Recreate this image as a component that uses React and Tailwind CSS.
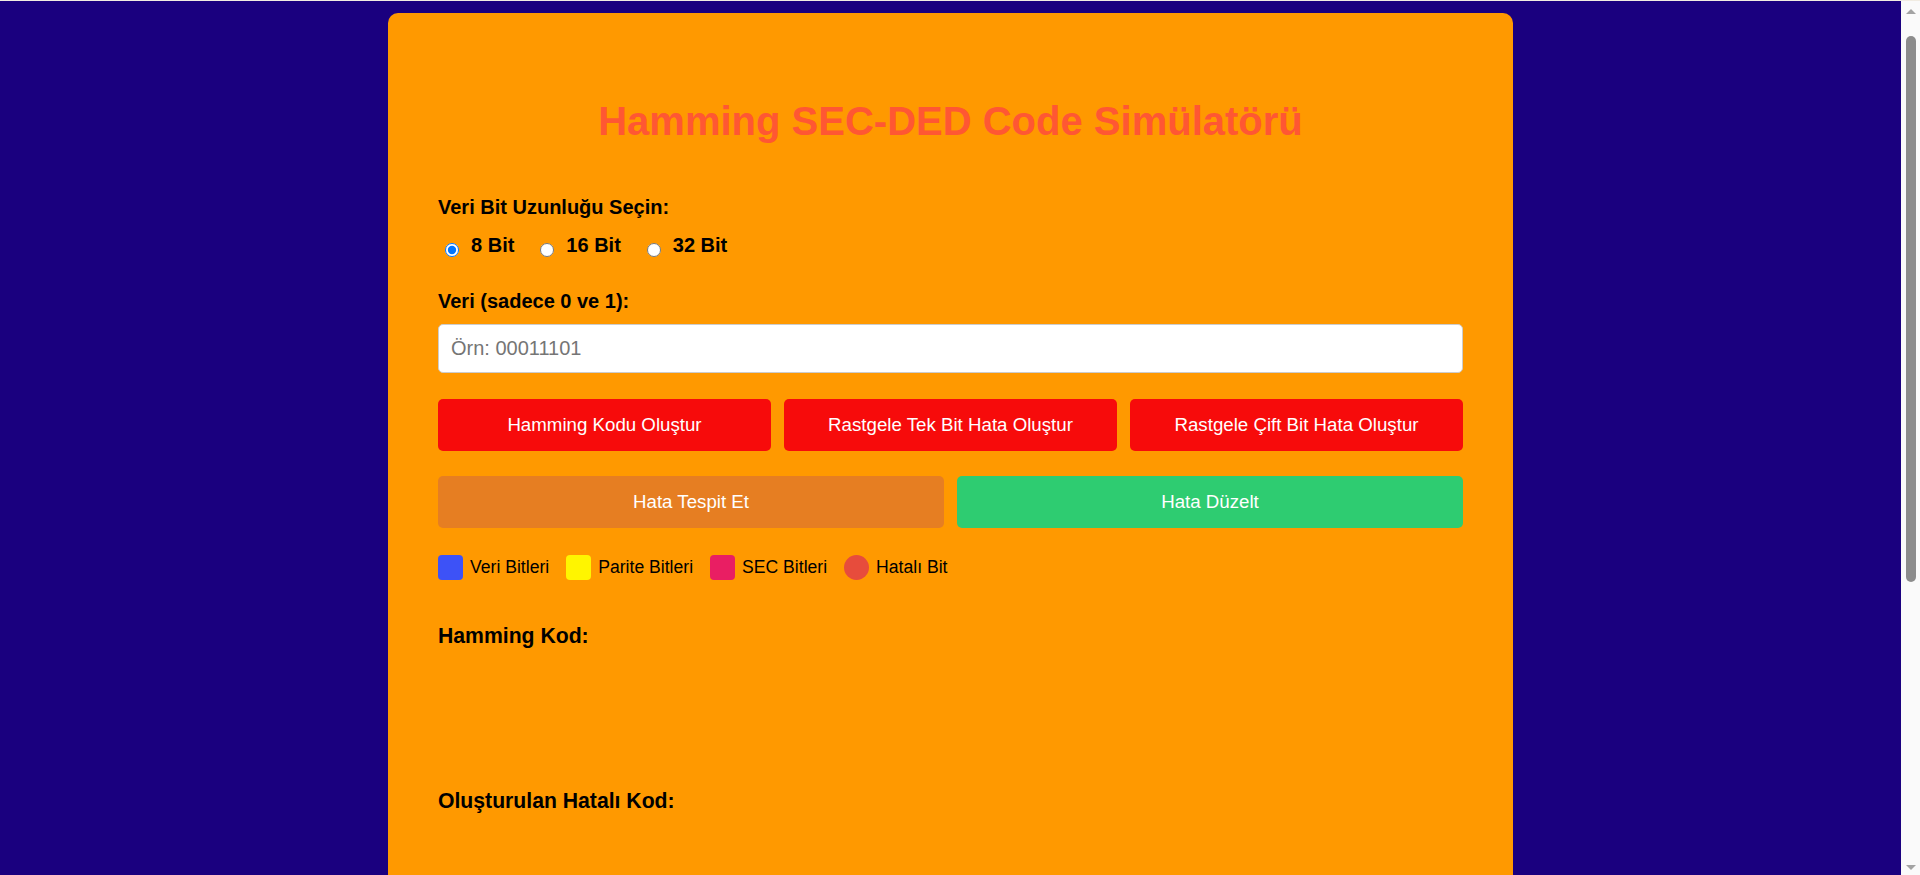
import React, { useState } from "react";

function FakeScrollbar() {
  return (
    <div className="fixed right-0 top-0 z-10 flex h-screen w-[19px] flex-col items-center bg-[#fafafa]">
      <div className="mt-[9px] h-0 w-0 border-x-[5px] border-b-[5px] border-x-transparent border-b-[#a3a3a3]" />
      <div className="mt-[22px] h-[546px] w-[10px] rounded-full bg-[#8c8c8c]" />
      <div className="flex-1" />
      <div className="mb-[5px] h-0 w-0 border-x-[5px] border-t-[5px] border-x-transparent border-t-[#a3a3a3]" />
    </div>
  );
}

export default function App() {
  const [bits, setBits] = useState("8");
  const font = { fontFamily: '"Liberation Sans", Arial, sans-serif' };
  const opts = ["8", "16", "32"];
  return (
    <div className="min-h-screen bg-[#1a007f] text-black" style={font}>
      <div className="relative z-20 h-px bg-[#f1ece2]" />
      <FakeScrollbar />
      <div className="pr-[19px]">
        <div className="mx-auto mt-[12px] mb-[13px] w-[1125px] rounded-[10px] bg-[#ff9900] px-[50px] pt-[85px] pb-[60px]">
          <h1 className="text-center text-[40px] leading-[46px] font-bold text-[#ff5733]">
            Hamming SEC-DED Code Simülatörü
          </h1>

          <div className="mt-[52px] text-[20px] leading-[23px] font-bold">Veri Bit Uzunluğu Seçin:</div>
          <div className="mt-[14px] flex h-[23px] gap-[19px]">
            {opts.map((o) => (
              <label key={o} className="flex items-start gap-[12px] cursor-pointer">
                <input
                  type="radio"
                  name="bits"
                  checked={bits === o}
                  onChange={() => setBits(o)}
                  className="ml-[7px] mt-[10px] h-[14px] w-[14px] m-0"
                />
                <span className="text-[20px] leading-[24px] font-bold">{o} Bit</span>
              </label>
            ))}
          </div>

          <div className="mt-[34px] text-[20px] leading-[23px] font-bold">Veri (sadece 0 ve 1):</div>
          <input
            type="text"
            placeholder="Örn: 00011101"
            className="mt-[11px] block h-[49px] w-full rounded-[5px] border border-[#cccccc] bg-white pl-[12px] text-[20px] outline-none placeholder:text-[#757575]"
            style={font}
          />

          <div className="mt-[26px] grid grid-cols-3 gap-[13px]">
            {["Hamming Kodu Oluştur", "Rastgele Tek Bit Hata Oluştur", "Rastgele Çift Bit Hata Oluştur"].map((t) => (
              <button
                key={t}
                className="flex h-[52px] items-center justify-center rounded-[5px] bg-[#f70b0b] text-[18.7px] text-white"
                style={font}
              >
                {t}
              </button>
            ))}
          </div>

          <div className="mt-[25px] grid grid-cols-2 gap-[13px]">
            <button className="flex h-[52px] items-center justify-center rounded-[5px] bg-[#e67e22] text-[18.7px] text-white" style={font}>
              Hata Tespit Et
            </button>
            <button className="flex h-[52px] items-center justify-center rounded-[5px] bg-[#2ecc71] text-[18.7px] text-white" style={font}>
              Hata Düzelt
            </button>
          </div>

          <div className="mt-[27px] flex h-[25px] items-center gap-[17px] text-[17.6px]">
            <div className="flex items-center gap-[7px]">
              <span className="h-[25px] w-[25px] rounded-[4px] bg-[#3d52f7]" />
              <span>Veri Bitleri</span>
            </div>
            <div className="flex items-center gap-[7px]">
              <span className="h-[25px] w-[25px] rounded-[4px] bg-[#fff500]" />
              <span>Parite Bitleri</span>
            </div>
            <div className="flex items-center gap-[7px]">
              <span className="h-[25px] w-[25px] rounded-[4px] bg-[#e91e63]" />
              <span>SEC Bitleri</span>
            </div>
            <div className="flex items-center gap-[7px]">
              <span className="h-[25px] w-[25px] rounded-full bg-[#e74c3c]" />
              <span>Hatalı Bit</span>
            </div>
          </div>

          <h3 className="mt-[44px] text-[21.2px] leading-[24px] font-bold">Hamming Kod:</h3>
          <div className="h-[141px]" />
          <h3 className="text-[21.2px] leading-[24px] font-bold">Oluşturulan Hatalı Kod:</h3>
          <div className="h-[141px]" />
          <div className="h-[24px]" />
          <div className="h-[141px]" />
          <div className="h-[40px]" />
        </div>
      </div>
    </div>
  );
}
